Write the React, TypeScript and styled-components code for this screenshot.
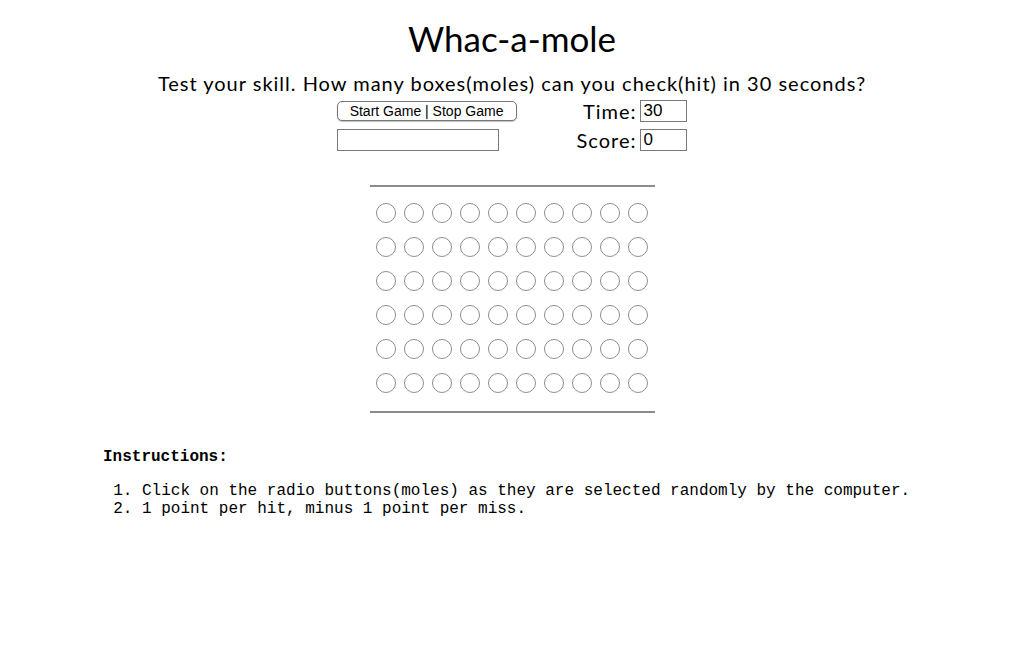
import styled, { createGlobalStyle } from "styled-components";

const GlobalStyle = createGlobalStyle`
  body {
    margin: 0;
    background: #fff;
    color: #000;
    font-family: Lato, "Open Sans", sans-serif;
  }
`;

const ROWS = 6;
const COLS = 10;

const App = () => {
  return (
    <>
      <GlobalStyle />
      <Page>
        <Title>Whac-a-mole</Title>
        <Lead>Test your skill. How many boxes(moles) can you check(hit) in 30 seconds?</Lead>
        <Controls>
          <GameButton type="button">Start Game | Stop Game</GameButton>
          <Field>
            <Label>Time:</Label>
            <SmallInput defaultValue="30" />
          </Field>
          <MessageInput />
          <Field>
            <Label>Score:</Label>
            <SmallInput defaultValue="0" />
          </Field>
        </Controls>
        <Board>
          <Rule />
          <Grid>
            {Array.from({ length: ROWS * COLS }).map((_, i) => (
              <Mole key={i} type="radio" name={`mole-${i}`} />
            ))}
          </Grid>
          <Rule />
        </Board>
      </Page>
      <Instructions>
        <Heading>Instructions:</Heading>
        <Steps>
          <li>Click on the radio buttons(moles) as they are selected randomly by the computer.</li>
          <li>1 point per hit, minus 1 point per miss.</li>
        </Steps>
      </Instructions>
    </>
  );
};

const Page = styled.div`
  display: flex;
  flex-direction: column;
  align-items: center;
`;

const Title = styled.h1`
  margin: 17px 0 0;
  font-size: 35px;
  font-weight: 400;
  line-height: 42px;
`;

const Lead = styled.p`
  margin: 12px 0 0;
  font-size: 20px;
  line-height: 24px;
  letter-spacing: 1px;
`;

const Controls = styled.div`
  display: grid;
  grid-template-columns: 180px auto;
  column-gap: 60px;
  row-gap: 7px;
  margin-top: 5px;
  align-items: center;
`;

const GameButton = styled.button`
  width: 180px;
  height: 20px;
  padding: 0;
  background: #fff;
  border: 1px solid #767676;
  border-radius: 5px;
  box-shadow: 0 1px 1px rgba(0, 0, 0, 0.25);
  font-family: "Liberation Sans", Arial, sans-serif;
  font-size: 14px;
  color: #000;
`;

const MessageInput = styled.input`
  width: 162px;
  height: 22px;
  box-sizing: border-box;
  border: 1px solid #7a7a7a;
  padding: 0 2px;
  font-family: "Liberation Sans", Arial, sans-serif;
`;

const Field = styled.div`
  display: flex;
  align-items: center;
  justify-content: flex-end;
  gap: 4px;
`;

const Label = styled.span`
  font-size: 20px;
  line-height: 22px;
  letter-spacing: 1px;
`;

const SmallInput = styled.input`
  width: 47px;
  height: 22px;
  box-sizing: border-box;
  border: 1px solid #7a7a7a;
  padding: 0 2px;
  font-family: "Liberation Sans", Arial, sans-serif;
  font-size: 17px;
  color: #000;
`;

const Board = styled.div`
  width: 285px;
  margin-top: 34px;
`;

const Rule = styled.hr`
  margin: 0;
  border: none;
  border-top: 2px solid #8c8c8c;
`;

const Grid = styled.div`
  display: grid;
  grid-template-columns: repeat(${COLS}, 28px);
  grid-auto-rows: 34px;
  justify-content: center;
  align-items: center;
  justify-items: center;
  padding: 9px 0 11px;
`;

const Mole = styled.input`
  appearance: none;
  width: 20px;
  height: 20px;
  margin: 0;
  border: 1px solid #8f8f8f;
  border-radius: 50%;
  background: #fff;
`;

const Instructions = styled.div`
  margin: 35px 0 0 103px;
  font-family: "Liberation Mono", "Courier New", monospace;
  font-size: 16px;
`;

const Heading = styled.div`
  font-weight: 700;
  line-height: 18px;
`;

const Steps = styled.ol`
  margin: 16px 0 0;
  padding-left: 39px;
  line-height: 18px;
`;

export default App;
